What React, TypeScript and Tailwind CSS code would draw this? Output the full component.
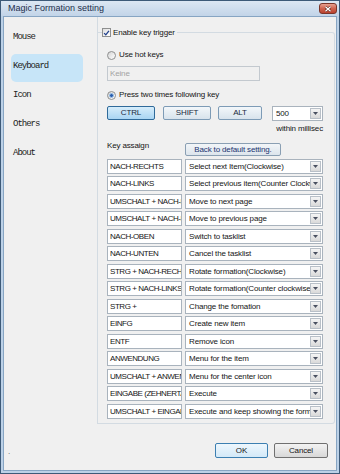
const sans = "font-['Liberation_Sans',Arial,sans-serif]";

const keyRows: [string, string][] = [
  ["NACH-RECHTS", "Select next Item(Clockwise)"],
  ["NACH-LINKS", "Select previous item(Counter Clockwise)"],
  ["UMSCHALT + NACH-RECHTS", "Move to next page"],
  ["UMSCHALT + NACH-LINKS", "Move to previous page"],
  ["NACH-OBEN", "Switch to tasklist"],
  ["NACH-UNTEN", "Cancel the tasklist"],
  ["STRG + NACH-RECHTS", "Rotate formation(Clockwise)"],
  ["STRG + NACH-LINKS", "Rotate formation(Counter clockwise)"],
  ["STRG +", "Change the fomation"],
  ["EINFG", "Create new item"],
  ["ENTF", "Remove icon"],
  ["ANWENDUNG", "Menu for the item"],
  ["UMSCHALT + ANWENDUNG", "Menu for the center icon"],
  ["EINGABE (ZEHNERTASTATUR)", "Execute"],
  ["UMSCHALT + EINGABE", "Execute and keep showing the formation"],
];

const pages = ["Mouse", "Keyboard", "Icon", "Others", "About"];

const Checkbox = () => (
  <span className="flex h-[9px] w-[9px] shrink-0 items-center justify-center border border-[#8e8f8f] bg-linear-to-br from-[#dedede] to-white">
    <svg viewBox="0 0 8 8" className="h-[8px] w-[8px]">
      <path d="M1.3 4.1 L3.2 6.1 L6.8 1.5" fill="none" stroke="#1f3f8c" strokeWidth="1.5" />
    </svg>
  </span>
);

const Radio = ({ checked }: { checked?: boolean }) => (
  <span className="flex h-[9px] w-[9px] shrink-0 items-center justify-center rounded-full border border-[#8e8f8f] bg-linear-to-br from-[#d4d4d4] to-white">
    {checked && <span className="h-[5px] w-[5px] rounded-full border border-[#9cc1e6] bg-[#2c5fae]" />}
  </span>
);

const DropButton = () => (
  <span className="my-[1px] mr-[1px] flex w-[11px] shrink-0 items-center justify-center border border-[#b9c0c8] bg-linear-to-b from-[#f5f5f5] to-[#d9d9d9]">
    <svg viewBox="0 0 5 3" className="h-[3px] w-[5px]">
      <path d="M0 0h5L2.5 3z" fill="#4a5060" />
    </svg>
  </span>
);

const Combo = ({ value, className = "" }: { value: string; className?: string }) => (
  <div className={`flex h-[15px] min-w-0 border border-[#a9b3bd] bg-white ${className}`}>
    <span className="min-w-0 flex-1 overflow-hidden whitespace-nowrap pl-[3px] leading-[13px]">{value}</span>
    <DropButton />
  </div>
);

const CloseButton = () => (
  <span className="flex h-[11px] w-[18px] items-center justify-center rounded-[3px] border border-[#7b3529] bg-linear-to-b from-[#e7a090] via-[#d0634f] to-[#b9412e]">
    <svg viewBox="0 0 8 6" className="h-[6px] w-[8px]">
      <path d="M1.5 0.8 L6.5 5.2 M6.5 0.8 L1.5 5.2" stroke="#5a1f16" strokeWidth="2.4" />
      <path d="M1.5 0.8 L6.5 5.2 M6.5 0.8 L1.5 5.2" stroke="#ffffff" strokeWidth="1.3" />
    </svg>
  </span>
);

const App = () => {
  return (
    <div className={`h-[474px] w-[340px] overflow-hidden border border-[#3d5a78] bg-[#bcd1e7] text-[8px] tracking-[-0.15px] text-[#151515] ${sans}`}>
      {/* title bar */}
      <div className="flex h-[15px] items-center justify-between bg-linear-to-b from-[#dce7f3] to-[#c2d4e8] pl-[7px] pr-[2px]">
        <span className="text-[9px] leading-[15px] tracking-normal text-[#1d2f4c]">Magic Formation setting</span>
        <CloseButton />
      </div>

      <div className="mx-[2px] flex h-[455px] flex-col border border-[#87a5c3] bg-[#f0f0f0]">
        <div className="flex h-[407px]">
          {/* page list */}
          <div className="flex w-[93px] shrink-0 flex-col gap-[1px] pt-[8px] font-['Liberation_Mono',monospace] text-[9px] tracking-[-1px] text-[#222]">
            {pages.map((p) => (
              <div
                key={p}
                className={`ml-[7px] h-[28px] w-[72px] rounded-[5px] pl-[2px] pt-[7px] leading-[10px] ${p === "Keyboard" ? "bg-[#c7e5f8]" : ""}`}
              >
                {p}
              </div>
            ))}
          </div>

          {/* keyboard page */}
          <div className="flex min-w-0 flex-1 flex-col border-l border-[#d3dbe2] pr-[1px] pt-[15px]">
            <div className="flex flex-1 flex-col rounded-r-[3px] border-t border-r border-b border-[#d3dbe2] pl-[9px] pr-[11px]">
              <div className="-ml-[5px] -mt-[6px] flex h-[11px] w-fit items-center gap-[2px] bg-[#f0f0f0] pr-[2px]">
                <Checkbox />
                <span>Enable key trigger</span>
              </div>

              <div className="mt-[12px] flex h-[10px] items-center gap-[3px]">
                <Radio />
                <span>Use hot keys</span>
              </div>
              <div className="mt-[6px] h-[15px] w-[153px] border border-[#c3c9cf] pl-[2px] leading-[13px] text-[#a3a3a3]">Keine</div>

              <div className="mt-[9px] flex h-[10px] items-center gap-[3px]">
                <Radio checked />
                <span>Press two times following key</span>
              </div>

              <div className="mt-[6px] flex h-[14px]">
                <div className="flex w-[48px] items-center justify-center rounded-[2px] border border-[#2f6a9a] bg-linear-to-b from-[#d6edfb] to-[#a9d5f3] text-[#1a2a40]">CTRL</div>
                <div className="ml-[8px] flex w-[48px] items-center justify-center rounded-[2px] border border-[#7d9bb6] bg-linear-to-b from-[#f3f7fa] to-[#d8e3ec] text-[#1a2a40]">SHIFT</div>
                <div className="ml-[7px] flex w-[44px] items-center justify-center rounded-[2px] border border-[#7d9bb6] bg-linear-to-b from-[#f3f7fa] to-[#d8e3ec] text-[#1a2a40]">ALT</div>
                <Combo value="500" className="ml-auto h-[14px] w-[51px]" />
              </div>
              <div className="mt-[4px] h-[10px] text-right leading-[10px]">within millisec</div>

              <div className="mt-[9px] flex h-[13px]">
                <span className="-mt-[2px] w-[78px] shrink-0 leading-[10px]">Key assaign</span>
                <div className="flex w-[96px] shrink-0 items-center justify-center rounded-[2px] border border-[#8a9fb3] bg-linear-to-b from-[#f2f5f8] to-[#dde5ec] text-[#1b3470]">
                  Back to default setting.
                </div>
              </div>

              <div className="mt-[2.5px] flex flex-col gap-[2.5px]">
                {keyRows.map(([k, action]) => (
                  <div key={k} className="flex h-[15px]">
                    <div className="w-[75px] shrink-0 overflow-hidden whitespace-nowrap border border-[#a9b3bd] bg-white pl-[2px] leading-[13px] tracking-[-0.45px]">{k}</div>
                    <Combo value={action} className="ml-[3px] flex-1" />
                  </div>
                ))}
              </div>
            </div>
          </div>
        </div>

        {/* dialog buttons */}
        <div className="flex flex-1 items-start pl-[4px] pr-[8px]">
          <span className="mt-[23px] leading-[10px] text-[#555]">.</span>
          <div className="ml-auto mt-[19px] flex h-[15px] w-[53px] items-center justify-center rounded-[2px] border border-[#3c7fb1] bg-linear-to-b from-[#eef7fd] to-[#d3e9f8]">OK</div>
          <div className="ml-[6px] mt-[19px] flex h-[15px] w-[54px] items-center justify-center rounded-[2px] border border-[#707070] bg-linear-to-b from-[#f3f3f3] to-[#d8d8d8]">Cancel</div>
        </div>
      </div>
    </div>
  );
};

export default App;
